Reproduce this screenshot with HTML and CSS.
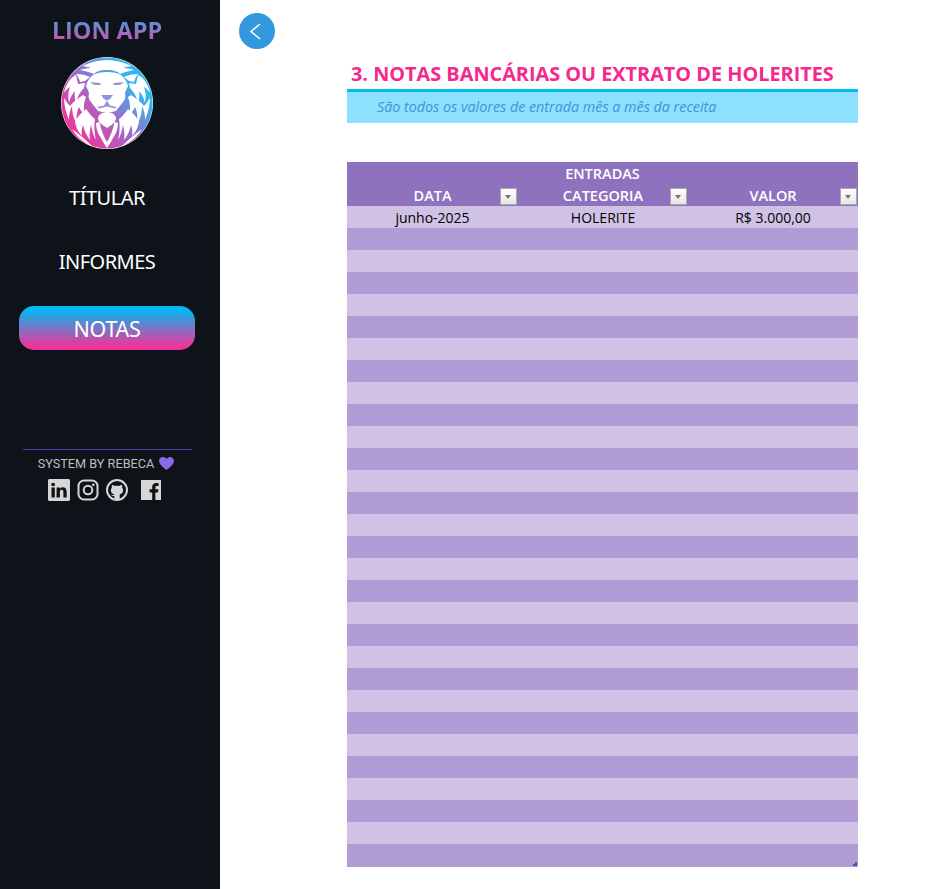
FILE: index.html
```html
<!DOCTYPE html>
<html lang="pt-BR">

<head>
    <meta charset="UTF-8">
    <meta name="viewport" content="width=device-width, initial-scale=1.0">
    <title>Lion App</title>

    <link rel="stylesheet" href="styles.css">
</head>

<body>

    <div id="app">
        <aside class="sidebar">
            <div class="brand">LION APP</div>

            <svg class="logo" viewBox="0 0 92 92" width="92" height="92">
                <defs>
                    <linearGradient id="lionGrad" x1="0.1" y1="0.85" x2="0.9" y2="0.15">
                        <stop offset="0.05" stop-color="#f0359c" />
                        <stop offset="0.45" stop-color="#a268c8" />
                        <stop offset="0.85" stop-color="#2fb8ee" />
                    </linearGradient>
                    <g id="lionHalf" fill="#fff">
                        <!-- crown -->
                        <path d="M46 3 C38 3 30 5 21 9 C24 9 27 10 30 11 C26 11 22 12 19 13 C24 14 29 15 33 17 C35 15 38 13 46 13 Z" />
                        <!-- ear -->
                        <path d="M15 17 C20 17 25 18 29 20 L24 24 L19 25 C18 22 17 19 15 17 Z" />
                        <!-- mane -->
                        <path d="M15 18 C9 21 5 27 3 36 C5 33 7 31 9 30 C7 35 7 40 8 46 C9 41 11 37 14 34 C13 38 14 42 15 46 C16 40 19 35 23 31 L24 26 L17 27 Z" />
                        <path d="M3 41 C3 48 5 56 8 63 C8 57 9 53 11 49 C11 55 12 61 16 67 C15 60 16 54 18 50 C19 53 21 55 24 58 C22 52 23 45 25 40 L22 38 C17 41 12 45 9 49 C7 47 5 44 3 41 Z" />
                        <path d="M25 52 C20 56 16 60 14 65 C15 70 17 75 21 79 C20 75 21 71 22 68 C23 73 25 78 29 83 C28 77 29 72 30 68 C31 73 32 78 35 83 C33 75 33 68 34 62 C31 60 28 56 25 52 Z" />
                        <path d="M11 72 C15 79 22 85 32 90 C25 83 18 77 11 72 Z" />
                        <path d="M35 66 C35 72 37 77 40 81 C42 85 44 88 46 91 L46 85 C43 80 40 73 38.500 65 Z" />
                        <!-- face -->
                        <path d="M46 15 C40 15 35 16 32 18 C28 21 26 25 25 29 C26 32 28 34 28 37 C27 40 28 43 30 45 C32 48 35 51 37 54 C40 55 43 55 46 55 Z" />
                        <path d="M46 55 C42 55 38 57 37 61 C37 65 41 68 46 71 Z" />
                    </g>
                    <g id="lionMarks">
                        <path d="M29 25 L39 26 L40 28 L33 28 Z" />
                        <path d="M40 38 L46 38 L46 43.500 L43 42 Z" />
                        <path d="M45.700 44 L46 44 L46 49.500 L38 51.500 L36.500 50 L43 48.500 Z" />
                    </g>
                </defs>
                <circle cx="46" cy="46" r="46" fill="#fff" />
                <circle cx="46" cy="46" r="45.500" fill="url(#lionGrad)" />
                <use href="#lionHalf" />
                <use href="#lionHalf" transform="matrix(-1 0 0 1 92 0)" />
                <g fill="#9a90dc">
                    <use href="#lionMarks" />
                    <use href="#lionMarks" transform="matrix(-1 0 0 1 92 0)" />
                </g>
            </svg>

            <nav class="menu">
                <a class="menu-item">TÍTULAR</a>
                <a class="menu-item">INFORMES</a>
                <a class="menu-item active">NOTAS</a>
            </nav>

            <div class="credits">
                <div class="credits-line">
                    SYSTEM BY REBECA
                    <svg class="heart" viewBox="0 0 16 14" width="15" height="13">
                        <path d="M8 14 C3 10 0 7.500 0 4.200 C0 1.800 1.900 0 4.200 0 C5.800 0 7.200 .8 8 2.200 C8.800 .8 10.200 0 11.800 0 C14.100 0 16 1.800 16 4.200 C16 7.500 13 10 8 14 Z" />
                    </svg>
                </div>
                <div class="socials">
                    <svg viewBox="0 0 16 16" width="22" height="22">
                        <path d="M0 1.146C0 .513.526 0 1.175 0h13.65C15.474 0 16 .513 16 1.146v13.708c0 .633-.526 1.146-1.175 1.146H1.175C.526 16 0 15.487 0 14.854V1.146zm4.943 12.248V6.169H2.542v7.225h2.401zm-1.2-8.212c.837 0 1.358-.554 1.358-1.248-.015-.709-.52-1.248-1.342-1.248-.822 0-1.359.54-1.359 1.248 0 .694.521 1.248 1.327 1.248h.016zm4.908 8.212V9.359c0-.216.016-.432.08-.586.173-.431.568-.878 1.232-.878.869 0 1.216.662 1.216 1.634v3.865h2.401V9.25c0-2.22-1.184-3.252-2.764-3.252-1.274 0-1.845.7-2.165 1.193v.025h-.016a5.54 5.54 0 0 1 .016-.025V6.169h-2.4c.03.678 0 7.225 0 7.225h2.4z" />
                    </svg>
                    <svg viewBox="0 0 22 22" width="22" height="22">
                        <rect x="1.500" y="1.500" width="19" height="19" rx="5.500" fill="none" stroke="#d6d6d6" stroke-width="2" />
                        <circle cx="11" cy="11" r="4.300" fill="none" stroke="#d6d6d6" stroke-width="2" />
                        <circle cx="16.300" cy="5.700" r="1.300" />
                    </svg>
                    <svg viewBox="0 0 22 22" width="22" height="22">
                        <circle cx="11" cy="11" r="10" fill="none" stroke="#d6d6d6" stroke-width="2" />
                        <path d="M8.300 20.500 V17 C6.400 17.300 5.600 16.400 5 15.200 C6 15.400 6.500 16 7.200 16 C7.700 16 8.100 15.800 8.300 15.400 C6.100 15 4.800 13.500 4.800 11.300 C4.800 10.300 5.200 9.400 5.800 8.700 C5.600 7.900 5.700 6.800 6.100 6 C7.100 6 7.900 6.500 8.700 7.100 C10.200 6.700 11.800 6.700 13.300 7.100 C14.100 6.500 14.900 6 15.900 6 C16.300 6.800 16.400 7.900 16.200 8.700 C16.800 9.400 17.200 10.300 17.200 11.300 C17.200 13.500 15.900 15 13.700 15.400 C13.600 16 13.700 16.500 13.700 17.300 V20.500 Z" />
                    </svg>
                    <svg class="fb" viewBox="0 0 20 20" width="20" height="20">
                        <path d="M0 0 H20 V20 H14.400 V12.400 H17 L17.400 9.300 H14.400 V7.400 C14.400 6.500 14.700 5.900 16 5.900 H17.500 V3.100 C17.200 3.100 16.300 3 15.200 3 C12.900 3 11.200 4.400 11.200 7 V9.300 H8.600 V12.400 H11.200 V20 H0 Z" />
                    </svg>
                </div>
            </div>
        </aside>

        <main class="content">
            <a class="back-btn">
                <svg viewBox="0 0 36 36" width="36" height="36">
                    <path d="M21 11 L12 18.500 L21 26" fill="none" stroke="#fff" stroke-width="1.500" />
                </svg>
            </a>

            <section class="sheet">
                <h1 class="sheet-title">3. NOTAS BANCÁRIAS OU EXTRATO DE HOLERITES</h1>
                <p class="sheet-note">São todos os valores de entrada mês a mês da receita</p>

                <div class="table-wrap">
                    <table id="tbl">
                        <colgroup>
                            <col class="col-first">
                            <col>
                            <col>
                        </colgroup>
                        <thead>
                            <tr>
                                <th colspan="3">ENTRADAS</th>
                            </tr>
                            <tr>
                                <th>DATA<span class="filter"></span></th>
                                <th>CATEGORIA<span class="filter"></span></th>
                                <th>VALOR<span class="filter"></span></th>
                            </tr>
                        </thead>
                        <tbody>
                            <tr><td>junho-2025</td><td>HOLERITE</td><td>R$ 3.000,00</td></tr>
                            <tr><td></td><td></td><td></td></tr>
                            <tr><td></td><td></td><td></td></tr>
                            <tr><td></td><td></td><td></td></tr>
                            <tr><td></td><td></td><td></td></tr>
                            <tr><td></td><td></td><td></td></tr>
                            <tr><td></td><td></td><td></td></tr>
                            <tr><td></td><td></td><td></td></tr>
                            <tr><td></td><td></td><td></td></tr>
                            <tr><td></td><td></td><td></td></tr>
                            <tr><td></td><td></td><td></td></tr>
                            <tr><td></td><td></td><td></td></tr>
                            <tr><td></td><td></td><td></td></tr>
                            <tr><td></td><td></td><td></td></tr>
                            <tr><td></td><td></td><td></td></tr>
                            <tr><td></td><td></td><td></td></tr>
                            <tr><td></td><td></td><td></td></tr>
                            <tr><td></td><td></td><td></td></tr>
                            <tr><td></td><td></td><td></td></tr>
                            <tr><td></td><td></td><td></td></tr>
                            <tr><td></td><td></td><td></td></tr>
                            <tr><td></td><td></td><td></td></tr>
                            <tr><td></td><td></td><td></td></tr>
                            <tr><td></td><td></td><td></td></tr>
                            <tr><td></td><td></td><td></td></tr>
                            <tr><td></td><td></td><td></td></tr>
                            <tr><td></td><td></td><td></td></tr>
                            <tr><td></td><td></td><td></td></tr>
                            <tr><td></td><td></td><td></td></tr>
                            <tr class="last-row"><td></td><td></td><td></td></tr>
                        </tbody>
                    </table>
                    <span class="resize-handle"></span>
                </div>
            </section>
        </main>
    </div>

</body>

</html>
```

FILE: styles.css
```css
html,
body {
    margin: 0;
    padding: 0;
    background: #fff;
}

body {
    font-family: "Open Sans", "Noto Sans", sans-serif;
}

#app {
    display: flex;
    height: 889px;
    overflow: hidden;
}

.sidebar {
    width: 220px;
    flex: none;
    background: #0d1318;
    display: flex;
    flex-direction: column;
    align-items: center;
    box-sizing: border-box;
    padding: 15px 6px 0 0;
}

.brand {
    font-size: 23.400px;
    line-height: 30px;
    font-weight: 700;
    background-image: linear-gradient(#3fa6e4, #d74aa9);
    -webkit-background-clip: text;
    background-clip: text;
    color: transparent;
}

.logo {
    margin-top: 12px;
    display: block;
}

.menu {
    margin-top: 26px;
    width: 176px;
    display: flex;
    flex-direction: column;
    gap: 20px;
}

.menu-item {
    height: 44px;
    line-height: 45px;
    text-align: center;
    color: #fff;
    font-size: 20px;
    letter-spacing: -0.5px;
    font-family: "Noto Sans", sans-serif;
}

.menu-item.active {
    margin-top: 3px;
    border-radius: 15px;
    font-size: 21.500px;
    letter-spacing: -0.3px;
    line-height: 45px;
    background-image: linear-gradient(#00b9f2 8%, #f0339a 92%);
}

.credits {
    margin-top: 99px;
    width: 169px;
    border-top: 1px solid #4f3aa6;
    text-align: center;
    color: #bdbdbd;
    font-family: "Roboto", sans-serif;
    font-size: 12.700px;
}

.credits-line {
    margin-top: 5px;
    padding-right: 2px;
    line-height: 17px;
    display: flex;
    justify-content: center;
    align-items: center;
    gap: 5px;
}

.heart {
    fill: #8d68e6;
}

.socials {
    margin-top: 7px;
    padding-right: 6px;
    display: flex;
    justify-content: center;
    align-items: center;
    gap: 7px;
}

.socials svg {
    fill: #d6d6d6;
    display: block;
}

.socials .fb {
    margin-left: 6px;
}

.content {
    flex: 1;
    min-width: 0;
    padding: 13px 0 0 19px;
}

.back-btn {
    display: block;
    width: 36px;
    height: 36px;
    border-radius: 50%;
    background: #3398dd;
}

.back-btn svg {
    display: block;
}

.sheet {
    width: 511px;
    margin: 12px 0 0 108px;
}

.sheet-title {
    margin: 0;
    padding-left: 4px;
    height: 28px;
    line-height: 26px;
    font-size: 19.850px;
    font-weight: 700;
    color: #f5288e;
    border-bottom: 3px solid #00c0f3;
}

.sheet-note {
    margin: 0;
    height: 31px;
    line-height: 29px;
    padding-left: 30px;
    background: #8ee0ff;
    color: #3a96dc;
    font-size: 14.300px;
    font-style: italic;
}

.table-wrap {
    position: relative;
    margin-top: 39px;
}

#tbl {
    width: 100%;
    border-collapse: collapse;
    table-layout: fixed;
    font-size: 14px;
}

.col-first {
    width: 171px;
}

#tbl th,
#tbl td {
    height: 22px;
    padding: 2px 0 0;
    box-sizing: border-box;
    text-align: center;
    line-height: 20px;
}

#tbl th {
    position: relative;
    background: #8f72be;
    color: #fff;
    font-size: 14.500px;
    font-weight: 600;
}

#tbl td {
    color: #000;
}

#tbl tbody tr:nth-child(odd) {
    background: #d0c2e5;
}

#tbl tbody tr:nth-child(even) {
    background: #b29cd5;
}

#tbl .last-row td {
    height: 23px;
}

.filter {
    position: absolute;
    right: 1px;
    bottom: 1px;
    width: 17px;
    height: 17px;
    box-sizing: border-box;
    border: 1px solid #a9a9a9;
    background: linear-gradient(#fff, #e6e6e6);
}

.filter::after {
    content: "";
    position: absolute;
    left: 4px;
    top: 6px;
    border-left: 3.500px solid transparent;
    border-right: 3.500px solid transparent;
    border-top: 4px solid #777;
}

.resize-handle {
    position: absolute;
    right: 1px;
    bottom: 1px;
    width: 4px;
    height: 4px;
    background: #4a55b5;
    clip-path: polygon(50% 0, 100% 0, 100% 100%, 0 100%, 0 50%, 50% 50%);
}
```
